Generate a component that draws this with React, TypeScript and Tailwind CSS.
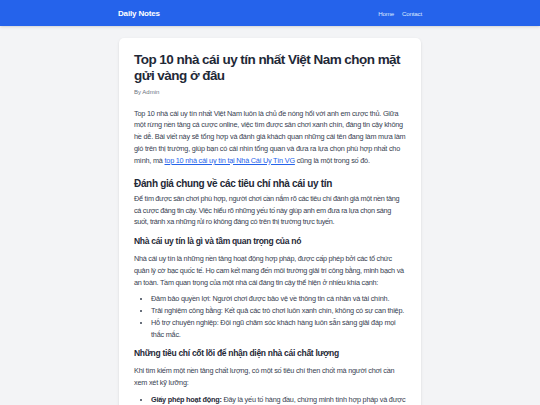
import React from 'react';

const App: React.FC = () => {
  return (
    <div className="min-h-screen bg-[#f3f4f6] font-['Liberation_Sans',Arial,sans-serif] text-[#374151]">
      <header className="h-[26px] bg-[#2563eb] shadow-sm">
        <div className="mx-auto flex h-full w-[304px] items-center justify-between pt-[1px]">
          <span className="text-[8px] font-bold tracking-[-0.02em] text-white">Daily Notes</span>
          <nav className="flex gap-[8px] text-[6.2px] tracking-[-0.03em] text-[#dbeafe]">
            <a href="#">Home</a>
            <a href="#">Contact</a>
          </nav>
        </div>
      </header>

      <main className="mx-auto mt-[12px] w-[302px] rounded-[5px] bg-white px-[15px] pt-[14px] pb-[10px] shadow-sm">
        <h1 className="text-[13.5px] font-bold leading-[16px] tracking-[-0.04em] text-[#1f2937]">
          Top 10 nhà cái uy tín nhất Việt Nam chọn mặt gửi vàng ở đâu
        </h1>
        <p className="mt-[4px] text-[6px] leading-[9px] text-[#6b7280]">By Admin</p>

        <div className="mt-[10.6px] text-[7.3px] leading-[11.75px] tracking-[-0.03em]">
          <p>
            Top 10 nhà cái uy tín nhất Việt Nam luôn là chủ đề nóng hổi với anh em cược thủ. Giữa
            một rừng nền tảng cá cược online, việc tìm được sân chơi xanh chín, đáng tin cậy không
            hề dễ. Bài viết này sẽ tổng hợp và đánh giá khách quan những cái tên đang làm mưa làm
            gió trên thị trường, giúp bạn có cái nhìn tổng quan và đưa ra lựa chọn phù hợp nhất cho
            mình, mà{' '}
            <a href="#" className="text-[#2563eb] underline">
              top 10 nhà cái uy tín tại Nhà Cái Uy Tín VG
            </a>{' '}
            cũng là một trong số đó.
          </p>

          <h2 className="mt-[10.5px] mb-[2px] text-[10px] font-bold leading-[14px] tracking-[-0.033em] text-[#1f2937]">
            Đánh giá chung về các tiêu chí nhà cái uy tín
          </h2>
          <p className="tracking-[-0.042em]">
            Để tìm được sân chơi phù hợp, người chơi cần nắm rõ các tiêu chí đánh giá một nền tảng
            cá cược đáng tin cậy. Việc hiểu rõ những yếu tố này giúp anh em đưa ra lựa chọn sáng
            suốt, tránh xa những rủi ro không đáng có trên thị trường trực tuyến.
          </p>

          <h3 className="mt-[7px] mb-[6px] text-[8.5px] font-bold leading-[12px] tracking-[-0.035em] text-[#1f2937]">
            Nhà cái uy tín là gì và tầm quan trọng của nó
          </h3>
          <p className="tracking-[-0.036em]">
            Nhà cái uy tín là những nền tảng hoạt động hợp pháp, được cấp phép bởi các tổ chức
            quản lý cờ bạc quốc tế. Họ cam kết mang đến môi trường giải trí công bằng, minh bạch và
            an toàn. Tầm quan trọng của một nhà cái đáng tin cậy thể hiện ở nhiều khía cạnh:
          </p>
          <ul className="mt-[5px] list-disc pl-[17px]">
            <li>Đảm bảo quyền lợi: Người chơi được bảo vệ về thông tin cá nhân và tài chính.</li>
            <li>Trải nghiệm công bằng: Kết quả các trò chơi luôn xanh chín, không có sự can thiệp.</li>
            <li>
              Hỗ trợ chuyên nghiệp: Đội ngũ chăm sóc khách hàng luôn sẵn sàng giải đáp mọi
              thắc mắc.
            </li>
          </ul>

          <h3 className="mt-[7px] mb-[6px] text-[8.5px] font-bold leading-[12px] tracking-[-0.035em] text-[#1f2937]">
            Những tiêu chí cốt lõi để nhận diện nhà cái chất lượng
          </h3>
          <p>
            Khi tìm kiếm một nền tảng chất lượng, có một số tiêu chí then chốt mà người chơi cần
            xem xét kỹ lưỡng:
          </p>
          <ul className="mt-[5px] list-disc pl-[17px]">
            <li>
              <strong className="text-[#1f2937]">Giấy phép hoạt động:</strong> Đây là yếu tố hàng
              đầu, chứng minh tính hợp pháp và được cơ quan quản lý uy tín công nhận.
            </li>
          </ul>
        </div>
      </main>
    </div>
  );
};

export default App;
